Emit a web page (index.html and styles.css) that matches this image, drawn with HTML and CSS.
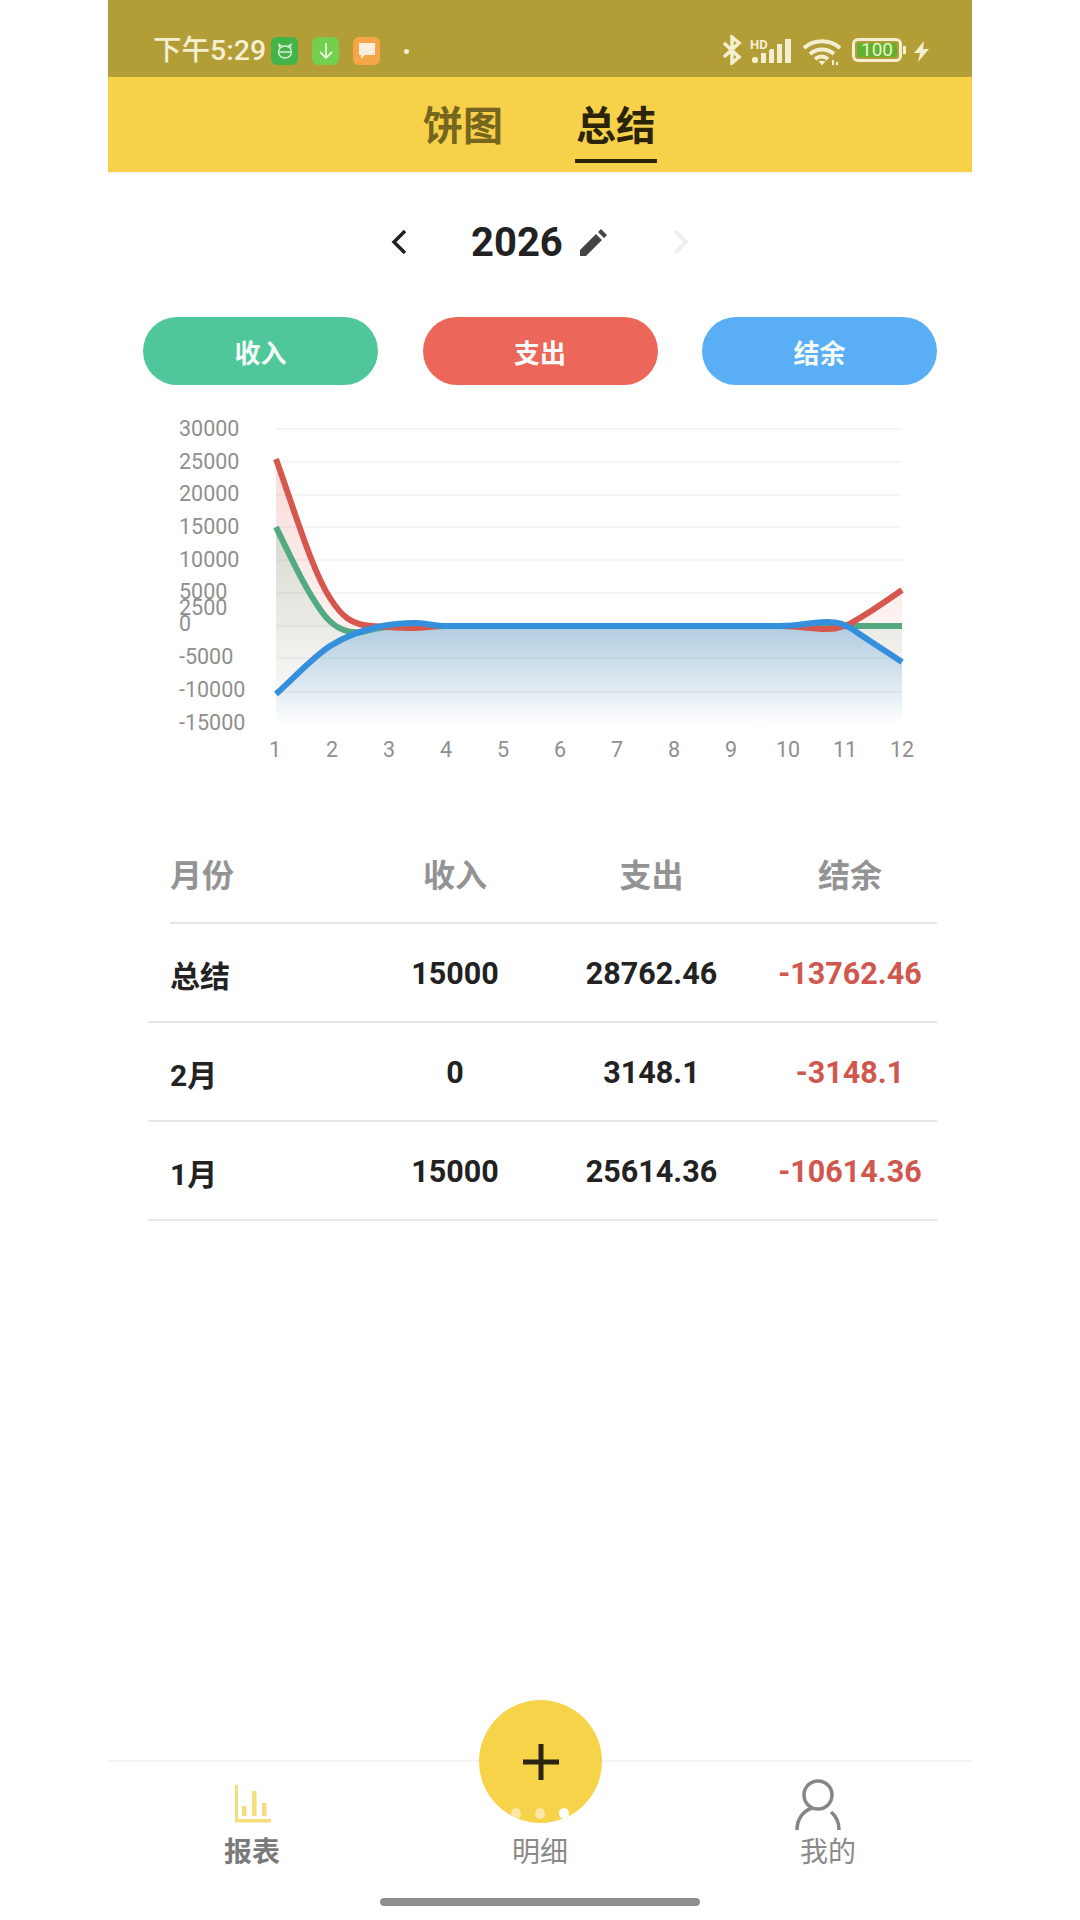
FILE: index.html
```html
<!DOCTYPE html>
<html lang="zh-CN">
<head>
    <meta charset="UTF-8">
    <meta name="viewport" content="width=device-width, initial-scale=1.0">
    <title>总结</title>
    <link rel="stylesheet" href="styles.css">
</head>
<body>
    <div class="phone">
        <div class="status-bar">
            <span class="status-time">下午5:29</span>
            <span class="app-icon app-green">
                <svg width="20" height="20" viewBox="0 0 20 20" fill="none" stroke="#d8f0cf" stroke-width="1.4"><ellipse cx="10" cy="11" rx="6.5" ry="6"/><path d="M5 7 4 3.500 7.500 5.500M15 7l1-3.500L12.500 5.500M4 11h12"/></svg>
            </span>
            <span class="app-icon app-lime">
                <svg width="18" height="20" viewBox="0 0 18 20" fill="none" stroke="#e4f7d6" stroke-width="1.8"><path d="M9 2v15M3 11l6 6 6-6"/></svg>
            </span>
            <span class="app-icon app-orange">
                <svg width="18" height="18" viewBox="0 0 18 18"><path d="M1 1h16v12H7l-4 4v-4H1z" fill="#fbeede"/></svg>
            </span>
            <span class="status-dot"></span>
            <span class="status-right">
                <svg class="ic-bt" width="20" height="30" viewBox="0 0 20 30" fill="none" stroke="#f5efd2" stroke-width="3.500"><path d="M2 8l15 14-7 6V2l7 6L2 22"/></svg>
                <span class="signal">
                    <span class="hd">HD</span>
                    <svg width="40" height="24" viewBox="0 0 40 24" fill="#f5efd2"><rect x="0" y="18" width="6" height="6" rx="2.500"/><rect x="9" y="14" width="5" height="10"/><rect x="17" y="10" width="5" height="14"/><rect x="25" y="5" width="5" height="19"/><rect x="33" y="0" width="6" height="24"/></svg>
                </span>
                <svg class="ic-wifi" width="38" height="27" viewBox="0 0 38 27" fill="none" stroke="#f5efd2" stroke-width="4"><path d="M1 9c10-9 26-9 36 0M7 15c7-6 17-6 24 0M12 20c4-3 9-3 13 0"/><path d="M15.500 22h7L19 26.500z" fill="#f5efd2" stroke="none"/><path d="M30 26v-5M34 26v-3" stroke-width="2"/></svg>
                <span class="battery"><span class="battery-fill">100</span></span>
                <span class="battery-nub"></span>
                <svg class="ic-bolt" width="15" height="21" viewBox="0 0 15 21"><path d="M10 0 0 12h6L4 21l11-13H9z" fill="#f5efd2"/></svg>
            </span>
        </div>

        <div class="top-tabs">
            <span class="top-tab">饼图</span>
            <span class="top-tab top-tab-active">总结</span>
        </div>

        <div class="year-row">
            <svg class="chev" width="16" height="26" viewBox="0 0 16 26" fill="none" stroke="#222" stroke-width="3.500"><path d="M14 2 3 13l11 11"/></svg>
            <span class="year">2026</span>
            <svg class="pencil" width="27" height="27" viewBox="0 0 27 27" fill="#444"><path d="M0 27v-6L16 5l6 6L6 27zM18 3l3-3 6 6-3 3z"/></svg>
            <svg class="chev chev-next" width="16" height="26" viewBox="0 0 16 26" fill="none" stroke="#eee" stroke-width="3.500"><path d="M2 2l11 11L2 24"/></svg>
        </div>

        <div class="pills">
            <button class="pill pill-in">收入</button>
            <button class="pill pill-out">支出</button>
            <button class="pill pill-rest">结余</button>
        </div>

        <svg class="chart" width="864" height="360" viewBox="108 410 864 360">
            <defs>
                <linearGradient id="fill-red" x1="0" y1="0" x2="0" y2="1">
                    <stop offset="0" stop-color="#d9534a" stop-opacity=".2"/>
                    <stop offset="1" stop-color="#d9534a" stop-opacity="0"/>
                </linearGradient>
                <linearGradient id="fill-green" x1="0" y1="0" x2="0" y2="1">
                    <stop offset="0" stop-color="#4fa97c" stop-opacity=".2"/>
                    <stop offset="1" stop-color="#4fa97c" stop-opacity="0"/>
                </linearGradient>
                <linearGradient id="fill-blue" x1="0" y1="0" x2="0" y2="1">
                    <stop offset="0" stop-color="#3a8fd8" stop-opacity=".34"/>
                    <stop offset="1" stop-color="#3a8fd8" stop-opacity="0"/>
                </linearGradient>
            </defs>

            <g class="grid">
                <path d="M276 429H902M276 462H902M276 495H902M276 527H902M276 560H902M276 593H902M276 626H902M276 658H902M276 692H902"/>
            </g>

            <g class="y-labels">
                <text x="179" y="436">30000</text>
                <text x="179" y="469">25000</text>
                <text x="179" y="501">20000</text>
                <text x="179" y="534">15000</text>
                <text x="179" y="567">10000</text>
                <text x="179" y="599">5000</text>
                <text x="179" y="615">2500</text>
                <text x="179" y="631">0</text>
                <text x="179" y="664">-5000</text>
                <text x="179" y="697">-10000</text>
                <text x="179" y="730">-15000</text>
            </g>

            <g class="x-labels">
                <text x="275" y="757">1</text>
                <text x="332" y="757">2</text>
                <text x="389" y="757">3</text>
                <text x="446" y="757">4</text>
                <text x="503" y="757">5</text>
                <text x="560" y="757">6</text>
                <text x="617" y="757">7</text>
                <text x="674" y="757">8</text>
                <text x="731" y="757">9</text>
                <text x="788" y="757">10</text>
                <text x="845" y="757">11</text>
                <text x="902" y="757">12</text>
            </g>

            <path d="M276 459C296 515 312 570 330 598C342 617 352 625 372 626C390 627 400 628 412 628C424 628 434 626 447 626H780C800 626 812 629 827 629C838 629 848 626 858 619C872 611 886 601 902 590V725H276Z" fill="url(#fill-red)"/>
            <path d="M276 527C292 560 306 590 322 612C332 626 344 634 362 632C374 629 384 626 400 626H902V725H276Z" fill="url(#fill-green)"/>
            <path d="M276 694C296 676 312 658 330 646C346 636 362 630 382 626C394 624 404 623 414 623C426 623 434 626 447 626H780C800 626 812 622 827 622C838 622 844 624 852 629C868 640 884 650 902 662V725H276Z" fill="url(#fill-blue)"/>

            <path class="line line-green" d="M276 527C292 560 306 590 322 612C332 626 344 634 362 632C374 629 384 626 400 626H902"/>
            <path class="line line-red" d="M276 459C296 515 312 570 330 598C342 617 352 625 372 626C390 627 400 628 412 628C424 628 434 626 447 626H780C800 626 812 629 827 629C838 629 848 626 858 619C872 611 886 601 902 590"/>
            <path class="line line-blue" d="M276 694C296 676 312 658 330 646C346 636 362 630 382 626C394 624 404 623 414 623C426 623 434 626 447 626H780C800 626 812 622 827 622C838 622 844 624 852 629C868 640 884 650 902 662"/>
        </svg>

        <div class="table">
            <div class="table-row table-head">
                <span class="cell-month">月份</span>
                <span>收入</span>
                <span>支出</span>
                <span>结余</span>
            </div>
            <div class="table-row">
                <span class="cell-month">总结</span>
                <span>15000</span>
                <span>28762.46</span>
                <span class="cell-neg">-13762.46</span>
            </div>
            <div class="table-row">
                <span class="cell-month">2月</span>
                <span>0</span>
                <span>3148.1</span>
                <span class="cell-neg">-3148.1</span>
            </div>
            <div class="table-row">
                <span class="cell-month">1月</span>
                <span>15000</span>
                <span>25614.36</span>
                <span class="cell-neg">-10614.36</span>
            </div>
        </div>

        <div class="tab-bar">
            <div class="tab-item tab-item-active">
                <svg width="36" height="38" viewBox="0 0 36 38" fill="#f3de7b"><rect x="0" y="0" width="3" height="37"/><rect x="0" y="34" width="36" height="3.500"/><rect x="7" y="21" width="4.500" height="10"/><rect x="17" y="6" width="4.500" height="25"/><rect x="27" y="18" width="4.500" height="13"/></svg>
                <span>报表</span>
            </div>
            <div class="tab-item tab-item-mid">
                <span>明细</span>
            </div>
            <div class="tab-item">
                <svg width="46" height="52" viewBox="0 0 46 52" fill="none" stroke="#868686" stroke-width="3.500"><circle cx="23" cy="16" r="14"/><path d="M2 51C2 40 8 32 17 29M36 33C41 37 44 44 44 51"/></svg>
                <span>我的</span>
            </div>
        </div>

        <div class="fab">
            <svg width="36" height="36" viewBox="0 0 36 36" fill="#2a2410"><rect x="15.500" y="0" width="5" height="36"/><rect x="0" y="15.500" width="36" height="5"/></svg>
            <span class="fab-dots">
                <span class="fab-dot"></span>
                <span class="fab-dot"></span>
                <span class="fab-dot fab-dot-last"></span>
            </span>
        </div>

        <div class="home-bar"></div>
    </div>
</body>
</html>
```

FILE: styles.css
```css
body {
    margin: 0;
    background-color: #ffffff;
    font-family: Roboto, "Noto Sans CJK SC", sans-serif;
    color: #222222;
}

.phone {
    position: relative;
    width: 864px;
    height: 1920px;
    margin: 0 auto;
    overflow: hidden;
    display: flex;
    flex-direction: column;
}

/* Status bar */
.status-bar {
    height: 77px;
    background-color: #b29d36;
    box-sizing: border-box;
    padding: 36px 43px 0 45px;
    display: flex;
    align-items: flex-start;
    color: #f5efd2;
}

.status-time {
    width: 118px;
    font-size: 28.500px;
    line-height: 30px;
    font-weight: 500;
    white-space: nowrap;
}

.app-icon {
    width: 27px;
    height: 28px;
    margin-top: 1px;
    margin-right: 14px;
    border-radius: 6px;
    display: flex;
    align-items: center;
    justify-content: center;
}

.app-green { background-color: #43b34a; }
.app-lime { background-color: #74cf4e; }
.app-orange { background-color: #f5a647; }

.status-dot {
    width: 5px;
    height: 5px;
    margin: 13px 0 0 10px;
    border-radius: 50%;
    background-color: #f5efd2;
}

.status-right {
    margin-left: auto;
    display: flex;
    align-items: flex-start;
}

.ic-bt { margin-top: -1px; }

.signal {
    position: relative;
    width: 40px;
    margin: 3px 0 0 10px;
}

.signal svg { display: block; }

.hd {
    position: absolute;
    left: -2px;
    top: 0;
    font-size: 13px;
    line-height: 11px;
    font-weight: 700;
    background-color: #b29d36;
    padding-right: 2px;
}

.ic-wifi { margin: 3px 0 0 11px; }

.battery {
    width: 50px;
    height: 24px;
    margin: 2px 0 0 11px;
    box-sizing: border-box;
    padding: 2px;
    border: 3px solid #f5efd2;
    border-radius: 6px;
    display: flex;
}

.battery-fill {
    flex: 1;
    background-color: #62b02c;
    border-radius: 2px;
    font-size: 19px;
    line-height: 14px;
    text-align: center;
    color: #e8f5c8;
}

.battery-nub {
    width: 3px;
    height: 8px;
    margin: 10px 0 0 1px;
    background-color: #f5efd2;
}

.ic-bolt { margin: 5px 0 0 8px; }

/* Tabs */
.top-tabs {
    height: 95px;
    background-color: #f7d14a;
    box-sizing: border-box;
    padding-left: 314px;
    display: flex;
    gap: 71px;
    box-shadow: 0 1px 2px rgba(0, 0, 0, 0.08);
}

.top-tab {
    width: 82px;
    height: 86px;
    box-sizing: border-box;
    padding-top: 22px;
    font-size: 40px;
    line-height: 56px;
    font-weight: 700;
    text-align: center;
    color: #75651f;
    white-space: nowrap;
}

.top-tab-active {
    color: #2c2409;
    border-bottom: 4px solid #2c2409;
}

/* Year */
.year-row {
    height: 140px;
    position: relative;
    display: flex;
    align-items: center;
    padding-left: 283px;
}

.year {
    margin-left: 64px;
    font-size: 40px;
    font-weight: 700;
    color: #222222;
}

.pencil { margin-left: 17px; }
.chev-next { margin-left: 66px; }

.pills {
    margin-top: 5px;
    padding: 0 35px;
    display: flex;
    justify-content: space-between;
}

.pill {
    width: 235px;
    height: 68px;
    border: none;
    border-radius: 34px;
    font-family: inherit;
    font-size: 26px;
    font-weight: 700;
    color: #f4fbf8;
}

.pill-in { background-color: #4fc79a; }
.pill-out { background-color: #ec6659; }
.pill-rest { background-color: #5aaef6; }

/* Chart */
.chart {
    display: block;
    margin-top: 25px;
}

.grid path {
    fill: none;
    stroke: #f5f5f5;
    stroke-width: 2;
}

.y-labels text,
.x-labels text {
    font-family: Roboto, sans-serif;
    font-size: 21.500px;
    fill: #8f8f8f;
}

.x-labels text { text-anchor: middle; }

.line {
    fill: none;
    stroke-width: 6;
}

.line-red { stroke: #d6574d; }
.line-green { stroke: #53aa80; }
.line-blue { stroke: #348fdc; }

/* Table */
.table {
    margin: 54px 35px 0 40px;
}

.table-row {
    height: 99px;
    box-sizing: border-box;
    padding-left: 22px;
    padding-top: 2px;
    display: grid;
    grid-template-columns: 200px 170px 223px 174px;
    align-items: center;
    border-bottom: 2px solid #e6e6e6;
    font-size: 30.500px;
    font-weight: 700;
    text-align: center;
    color: #222222;
    white-space: nowrap;
}

.cell-month { text-align: left; font-size: 30px; }
.cell-neg { color: #d0574d; }

.table-head {
    height: 100px;
    margin-left: 22px;
    padding-left: 0;
    padding-top: 0;
    font-size: 32px;
    font-weight: 700;
    color: #939393;
}

.table-head .cell-month { font-size: 32px; }

/* Bottom */
.tab-bar {
    position: absolute;
    left: 0;
    right: 0;
    top: 1760px;
    height: 160px;
    box-sizing: border-box;
    border-top: 2px solid #f6f6f6;
    display: grid;
    grid-template-columns: 288px 288px 288px;
}

.tab-item {
    position: relative;
    height: 110px;
    box-sizing: border-box;
    display: flex;
    flex-direction: column;
    align-items: center;
    justify-content: flex-end;
    font-size: 28px;
    line-height: 38px;
    color: #8a8a8a;
}

.tab-item svg { position: absolute; }
.tab-item-active { font-weight: 700; color: #7a7a7a; }
.tab-item-active svg { left: 127px; top: 23px; }
.tab-item:last-child svg { left: 111px; top: 17px; }

.fab {
    position: absolute;
    left: 371px;
    top: 1700px;
    width: 123px;
    height: 123px;
    border-radius: 50%;
    background-color: #f7d34a;
    overflow: hidden;
    display: flex;
    align-items: center;
    justify-content: center;
}

.fab-dots {
    position: absolute;
    left: 32px;
    top: 108px;
    display: flex;
    gap: 14px;
}

.fab-dot {
    width: 10px;
    height: 11px;
    border-radius: 50%;
    background-color: rgba(255, 255, 255, 0.5);
}

.fab-dot-last { background-color: #ffffff; }

.home-bar {
    position: absolute;
    left: 272px;
    top: 1898px;
    width: 320px;
    height: 8px;
    border-radius: 4px;
    background-color: #8e8e8e;
}
```
